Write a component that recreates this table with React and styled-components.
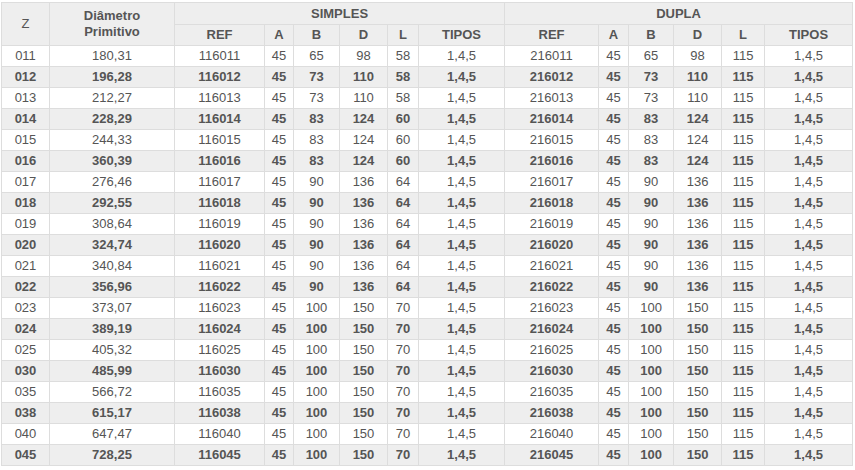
import React from "react";
import styled, { createGlobalStyle } from "styled-components";

const GlobalStyle = createGlobalStyle`
  body {
    margin: 0;
    background: #ffffff;
  }
`;

const Wrapper = styled.div`
  padding: 2px 0 0 1px;
`;

const Table = styled.table`
  border-collapse: collapse;
  table-layout: fixed;
  width: 852px;
  font-family: "Liberation Sans", Arial, sans-serif;
  font-size: 13px;
  color: #555555;
  border: 1px solid #dddddd;
`;

const HeadCell = styled.th`
  background-color: #eeeeee;
  border: 1px solid #dddddd;
  font-weight: ${(p) => (p.$light ? "normal" : "bold")};
  text-align: center;
  vertical-align: middle;
  padding: 0;
  height: ${(p) => (p.$tall ? "21px" : "20px")};
  line-height: 16px;
  color: #555555;
`;

const Row = styled.tr`
  background-color: ${(p) => (p.$alt ? "#eeeeee" : "#ffffff")};
  font-weight: ${(p) => (p.$alt ? "bold" : "normal")};
`;

const Cell = styled.td`
  border: 1px solid #dddddd;
  text-align: center;
  padding: 0;
  height: 20px;
  line-height: 20px;
  white-space: nowrap;
`;

const widths = [48, 125, 90, 29, 46, 48, 31, 86, 94, 30, 45, 48, 43, 88];

const base = [
  ["011", "180,31", 65, 98, 58],
  ["012", "196,28", 73, 110, 58],
  ["013", "212,27", 73, 110, 58],
  ["014", "228,29", 83, 124, 60],
  ["015", "244,33", 83, 124, 60],
  ["016", "360,39", 83, 124, 60],
  ["017", "276,46", 90, 136, 64],
  ["018", "292,55", 90, 136, 64],
  ["019", "308,64", 90, 136, 64],
  ["020", "324,74", 90, 136, 64],
  ["021", "340,84", 90, 136, 64],
  ["022", "356,96", 90, 136, 64],
  ["023", "373,07", 100, 150, 70],
  ["024", "389,19", 100, 150, 70],
  ["025", "405,32", 100, 150, 70],
  ["030", "485,99", 100, 150, 70],
  ["035", "566,72", 100, 150, 70],
  ["038", "615,17", 100, 150, 70],
  ["040", "647,47", 100, 150, 70],
  ["045", "728,25", 100, 150, 70],
];

const rows = base.map(([z, diam, b, d, l]) => [
  z,
  diam,
  "116" + z,
  45,
  b,
  d,
  l,
  "1,4,5",
  "216" + z,
  45,
  b,
  d,
  115,
  "1,4,5",
]);

const subHeads = ["REF", "A", "B", "D", "L", "TIPOS"];

export default function App() {
  return (
    <>
      <GlobalStyle />
      <Wrapper>
        <Table>
          <colgroup>
            {widths.map((w, i) => (
              <col key={i} style={{ width: w }} />
            ))}
          </colgroup>
          <thead>
            <tr>
              <HeadCell rowSpan={2} $light>
                Z
              </HeadCell>
              <HeadCell rowSpan={2}>
                Diâmetro
                <br />
                Primitivo
              </HeadCell>
              <HeadCell colSpan={6} $tall>
                SIMPLES
              </HeadCell>
              <HeadCell colSpan={6} $tall>
                DUPLA
              </HeadCell>
            </tr>
            <tr>
              {[...subHeads, ...subHeads].map((h, i) => (
                <HeadCell key={i}>{h}</HeadCell>
              ))}
            </tr>
          </thead>
          <tbody>
            {rows.map((r, i) => (
              <Row key={i} $alt={i % 2 === 1}>
                {r.map((v, j) => (
                  <Cell key={j}>{v}</Cell>
                ))}
              </Row>
            ))}
          </tbody>
        </Table>
      </Wrapper>
    </>
  );
}
